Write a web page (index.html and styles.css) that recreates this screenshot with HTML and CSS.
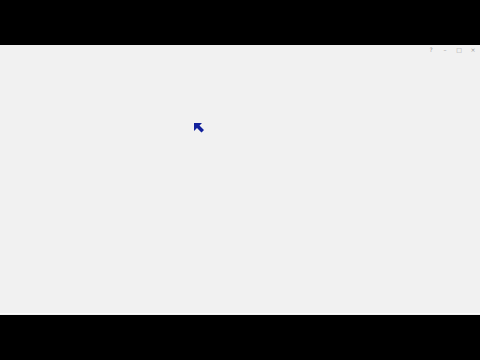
FILE: index.html
```html
<!DOCTYPE html>
<html>
<head>
<meta charset="utf-8">
<link rel="stylesheet" href="styles.css">
</head>
<body>
<div class="screen">
  <div class="bar"></div>
  <div class="window">
    <div class="titlebar">
      <span class="ctl">?</span>
      <span class="ctl">–</span>
      <span class="ctl">□</span>
      <span class="ctl">×</span>
    </div>
    <div class="content">
      <svg class="cursor" width="11" height="11" viewBox="0 0 11 11">
        <path d="M0 0 L8 0 L5.5 2.5 L10 7 L7.5 9.5 L3 5 L0 8 Z" fill="#12219c"/>
      </svg>
    </div>
    <div class="edge"></div>
  </div>
  <div class="bar"></div>
</div>
</body>
</html>
```
FILE: styles.css
```css
html, body {
  margin: 0;
  padding: 0;
  background: #000;
}
.screen {
  width: 480px;
  height: 360px;
  display: flex;
  flex-direction: column;
  overflow: hidden;
}
.bar {
  height: 45px;
  background: #000;
  flex: none;
}
.window {
  height: 270px;
  background: #f1f1f1;
  display: flex;
  flex-direction: column;
  flex: none;
  position: relative;
}
.titlebar {
  height: 10px;
  display: flex;
  justify-content: flex-end;
  align-items: center;
  padding-right: 0;
  font-family: "DejaVu Sans", sans-serif;
  font-size: 6px;
  color: #9a9a9a;
}
.ctl {
  width: 14px;
  text-align: center;
  line-height: 10px;
}
.content {
  flex: 1;
  position: relative;
}
.cursor {
  position: absolute;
  left: 194px;
  top: 68px;
}
.edge {
  height: 1px;
  background: #fafafa;
  margin-bottom: 1px;
}
```
